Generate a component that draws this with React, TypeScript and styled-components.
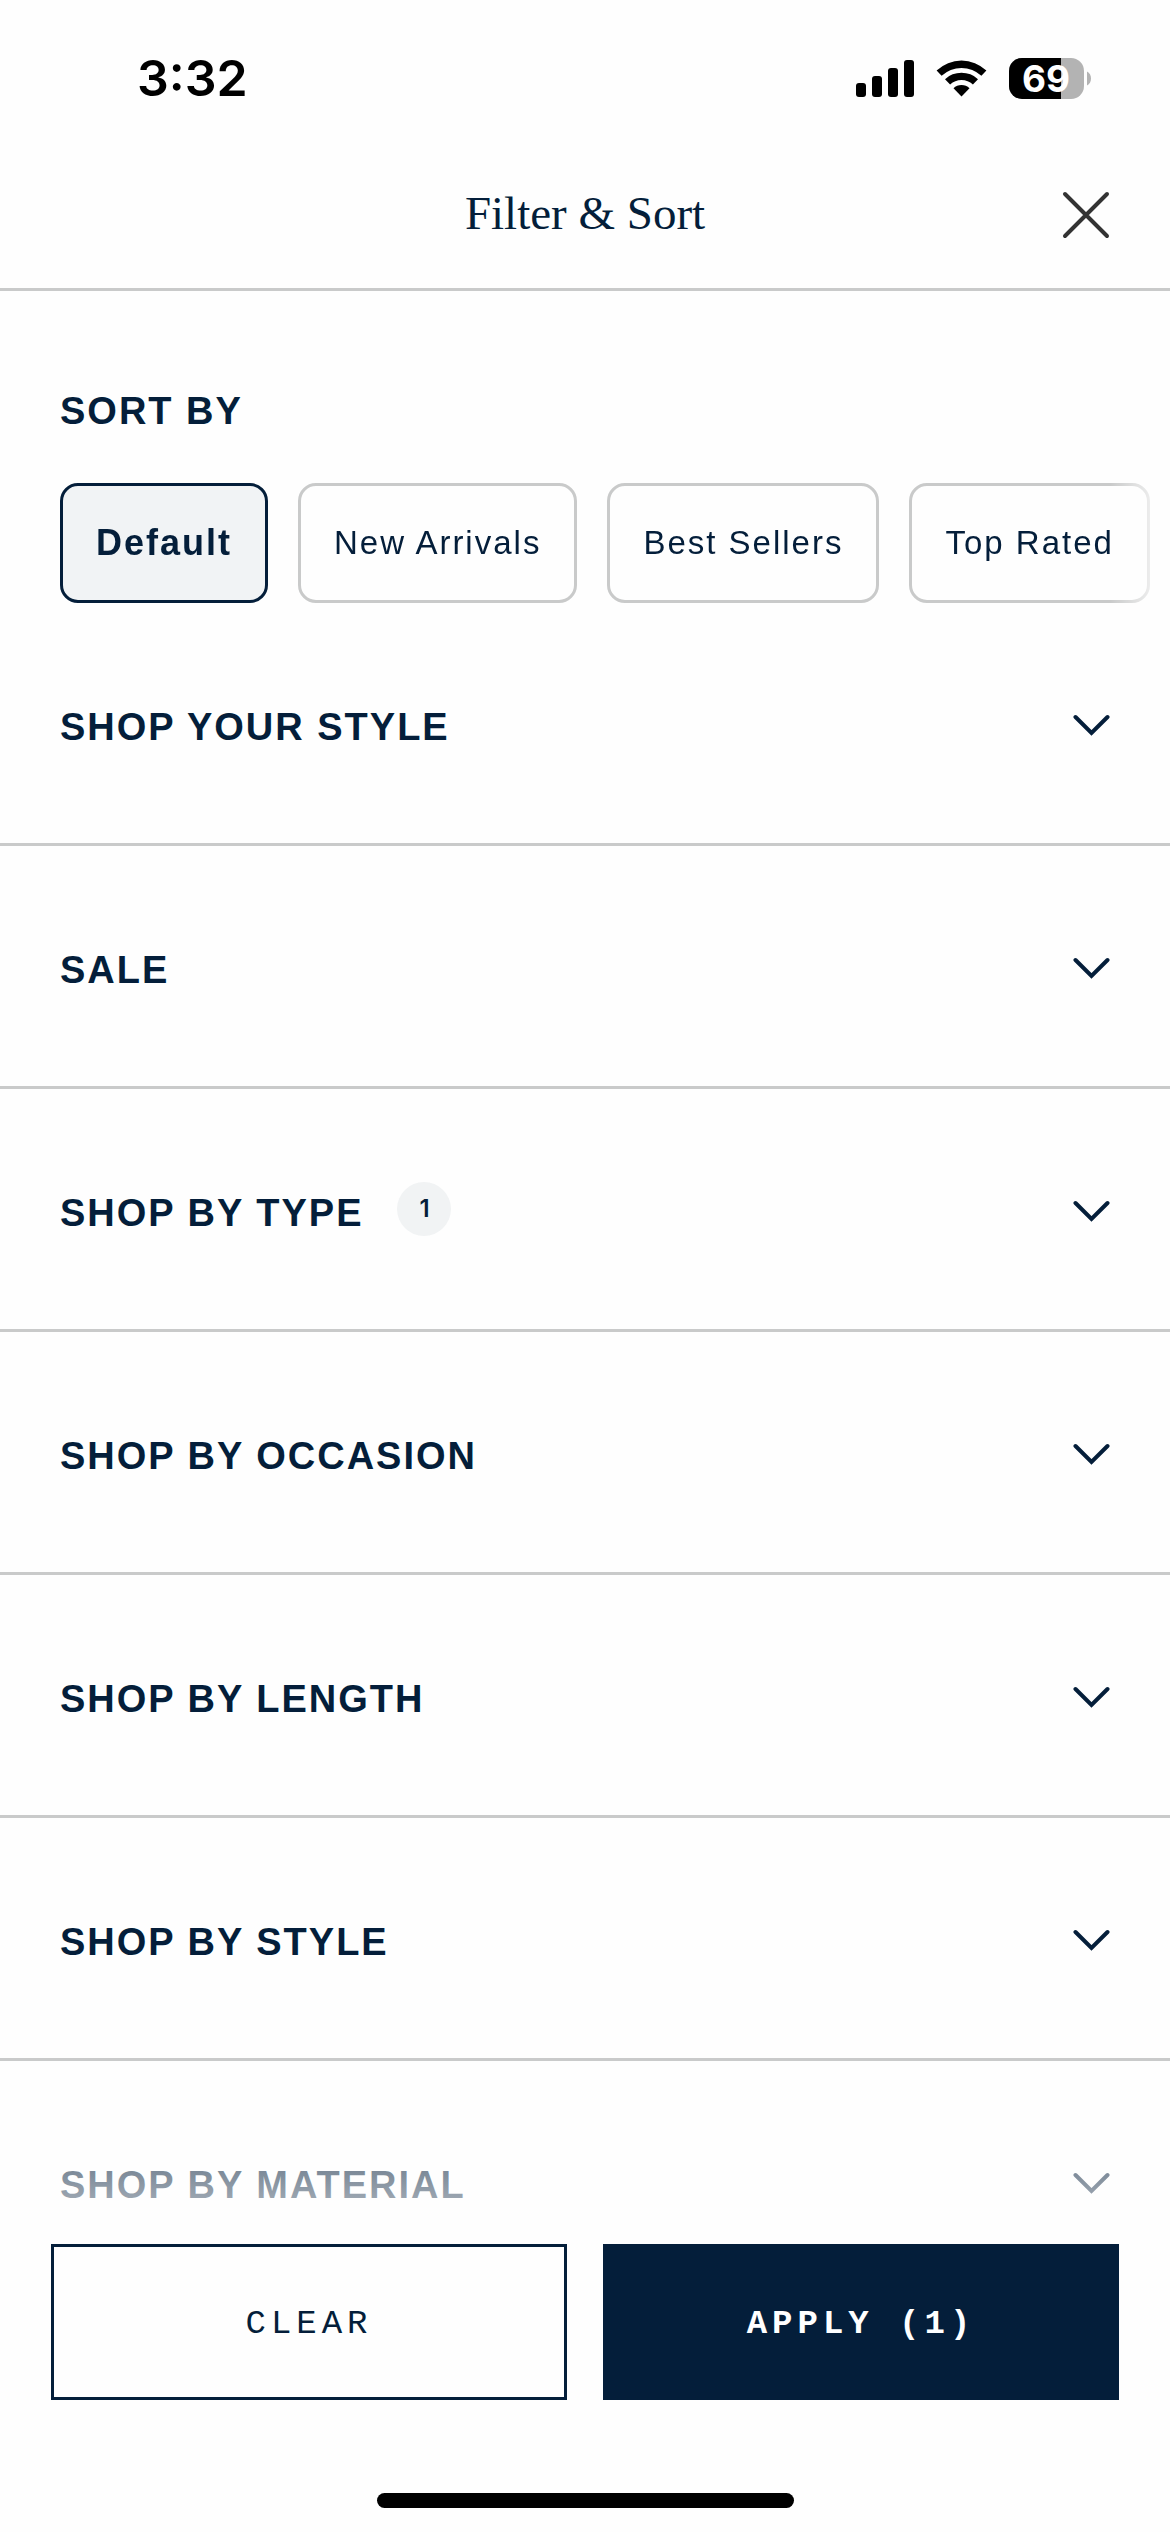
import React, { useState } from 'react';
import styled, { createGlobalStyle } from 'styled-components';

const navy = '#041e3a';
const line = '#c9caca';
const sans = "'Liberation Sans', Arial, sans-serif";
const system = "Inter, 'Liberation Sans', sans-serif";

const GlobalStyle = createGlobalStyle`
  *, *::before, *::after { box-sizing: border-box; }
  body { margin: 0; background: #fefefe; color: ${navy}; font-family: ${sans}; }
  button { font: inherit; color: inherit; background: none; border: 0; padding: 0; cursor: pointer; }
  h1, h2, h3 { margin: 0; }
`;

const Screen = styled.div`
  display: flex;
  flex-direction: column;
  height: 100vh;
  overflow: hidden;
`;

const StatusBar = styled.div`
  display: flex;
  align-items: center;
  justify-content: space-between;
  flex: none;
  height: 156px;
  padding: 0 79px 0 137px;
  color: #000;
`;

const Time = styled.time`
  font-family: ${system};
  font-size: 50px;
  line-height: 60px;
  font-weight: 600;
`;

const StatusIcons = styled.div`
  display: flex;
  align-items: center;
  gap: 22px;
`;

const BatteryText = styled.text`
  font-family: ${system};
  font-size: 37px;
  font-weight: 700;
  fill: #fff;
`;

const Header = styled.header`
  display: grid;
  grid-template-columns: 1fr auto 1fr;
  align-items: center;
  flex: none;
  height: 135px;
  padding: 0 60px 15px;
  border-bottom: 3px solid ${line};
`;

const Title = styled.h1`
  grid-column: 2;
  padding-bottom: 4px;
  font-family: 'Liberation Serif', 'Times New Roman', serif;
  font-size: 47px;
  line-height: 54px;
  font-weight: 400;
`;

const CloseButton = styled.button`
  justify-self: end;
  display: flex;
  color: #333;
`;

const Content = styled.main`
  flex: 1;
  min-height: 0;
  overflow: hidden auto;
  scrollbar-width: none;
`;

const SortSection = styled.section`
  padding-top: 96px;
`;

const SectionTitle = styled.h2`
  padding-left: 60px;
  font-size: 38px;
  line-height: 48px;
  font-weight: 700;
  letter-spacing: 2px;
`;

const ChipRow = styled.div`
  display: flex;
  gap: 30px;
  margin-top: 48px;
  padding: 0 60px;
  overflow: auto hidden;
  scrollbar-width: none;
  mask-image: linear-gradient(to right, #000 calc(100% - 60px), transparent);
`;

const Chip = styled.button<{ $selected: boolean }>`
  flex: none;
  height: 120px;
  padding: 0 33px;
  border: 3px solid ${p => (p.$selected ? navy : line)};
  border-radius: 18px;
  background: ${p => (p.$selected ? '#f1f3f5' : 'transparent')};
  font-size: ${p => (p.$selected ? 36 : 33)}px;
  line-height: 40px;
  font-weight: ${p => (p.$selected ? 700 : 400)};
  letter-spacing: 2px;
`;

const FilterHeading = styled.h3`
  border-bottom: 3px solid ${line};
`;

const FilterButton = styled.button`
  display: flex;
  align-items: center;
  width: 100%;
  height: 240px;
  padding: 0 60px;
  text-align: left;
`;

const FilterLabel = styled.span`
  padding-top: 8px;
  font-size: 38px;
  line-height: 48px;
  font-weight: 700;
  letter-spacing: 2px;
`;

const Badge = styled.span`
  display: grid;
  place-items: center;
  width: 54px;
  height: 54px;
  margin-left: 34px;
  border-radius: 50%;
  background: #f1f3f4;
  font-family: ${system};
  font-size: 24px;
  line-height: 28px;
  font-weight: 600;
`;

const Chevron = styled.svg`
  margin: 4px 0 0 auto;
`;

const Footer = styled.footer`
  position: relative;
  flex: none;
  padding: 0 51px 24px;

  &::before {
    content: '';
    position: absolute;
    inset: auto 0 100%;
    height: 184px;
    background: linear-gradient(to bottom, rgba(254, 254, 254, 0), rgba(254, 254, 254, 0.8));
    pointer-events: none;
  }
`;

const Actions = styled.div`
  display: grid;
  grid-template-columns: 1fr 1fr;
  gap: 36px;
`;

const ActionButton = styled.button<{ $primary?: boolean }>`
  height: 156px;
  padding-top: 4px;
  border: 3px solid ${navy};
  background: ${p => (p.$primary ? navy : 'transparent')};
  color: ${p => (p.$primary ? '#fff' : navy)};
  font-family: 'Liberation Mono', 'Courier New', monospace;
  font-size: 34px;
  line-height: 40px;
  font-weight: ${p => (p.$primary ? 700 : 400)};
  letter-spacing: 5px;
`;

const HomeIndicator = styled.div`
  width: 417px;
  height: 15px;
  margin: 93px auto 0;
  border-radius: 8px;
  background: #000;
`;

const SignalIcon = () => (
  <svg width="58" height="37" viewBox="0 0 58 37" aria-hidden="true">
    <rect x="0" y="23" width="10" height="14" rx="3" />
    <rect x="16" y="16" width="10" height="21" rx="3" />
    <rect x="32" y="8" width="10" height="29" rx="3" />
    <rect x="48" y="0" width="10" height="37" rx="3" />
  </svg>
);

const WifiIcon = () => (
  <svg width="51" height="37" viewBox="0 0 51 37" aria-hidden="true">
    <path d="M0.6 10.600a36 36 0 0 1 49.800 0l-5 5.200a29 29 0 0 0-39.800 0z" />
    <path d="M9 19.200a24 24 0 0 1 33 0l-5.100 5.300a16.600 16.600 0 0 0-22.800 0z" />
    <path d="M17.500 28.200a11.400 11.400 0 0 1 16 0l-8 8.300z" />
  </svg>
);

const BatteryIcon = () => (
  <svg width="82" height="49" viewBox="0 -4 82 49" role="img" aria-label="Battery 69 percent">
    <clipPath id="battery-body">
      <rect width="75" height="41" rx="13" />
    </clipPath>
    <g clipPath="url(#battery-body)">
      <rect width="75" height="41" fill="#b3b3b3" />
      <rect width="52" height="41" />
    </g>
    <path d="M78 13.500c2.600 1.200 4 3.900 4 7s-1.400 5.800-4 7z" fill="#b3b3b3" />
    <BatteryText x="37" y="34" textAnchor="middle">69</BatteryText>
  </svg>
);

const CloseIcon = () => (
  <svg width="48" height="48" viewBox="0 0 48 48" fill="none" stroke="currentColor" strokeWidth="4" strokeLinecap="round" aria-hidden="true">
    <path d="M3 3l42 42M45 3L3 45" />
  </svg>
);

const ChevronIcon = () => (
  <Chevron width="37" height="22" viewBox="0 0 37 22" fill="none" stroke="currentColor" strokeWidth="4" strokeLinecap="round" aria-hidden="true">
    <path d="M2.500 3L18.500 19L34.500 3" />
  </Chevron>
);

const sortOptions = ['Default', 'New Arrivals', 'Best Sellers', 'Top Rated'];

const filters: { label: string; count?: number }[] = [
  { label: 'SHOP YOUR STYLE' },
  { label: 'SALE' },
  { label: 'SHOP BY TYPE', count: 1 },
  { label: 'SHOP BY OCCASION' },
  { label: 'SHOP BY LENGTH' },
  { label: 'SHOP BY STYLE' },
  { label: 'SHOP BY MATERIAL' },
];

export default function App() {
  const [sort, setSort] = useState('Default');

  return (
    <Screen>
      <GlobalStyle />
      <StatusBar>
        <Time>3:32</Time>
        <StatusIcons>
          <SignalIcon />
          <WifiIcon />
          <BatteryIcon />
        </StatusIcons>
      </StatusBar>
      <Header>
        <Title>Filter &amp; Sort</Title>
        <CloseButton type="button" aria-label="Close">
          <CloseIcon />
        </CloseButton>
      </Header>
      <Content>
        <SortSection>
          <SectionTitle>SORT BY</SectionTitle>
          <ChipRow>
            {sortOptions.map(option => (
              <Chip
                key={option}
                type="button"
                $selected={option === sort}
                aria-pressed={option === sort}
                onClick={() => setSort(option)}
              >
                {option}
              </Chip>
            ))}
          </ChipRow>
        </SortSection>
        {filters.map(({ label, count }) => (
          <FilterHeading key={label}>
            <FilterButton type="button" aria-expanded={false}>
              <FilterLabel>{label}</FilterLabel>
              {count && <Badge>{count}</Badge>}
              <ChevronIcon />
            </FilterButton>
          </FilterHeading>
        ))}
      </Content>
      <Footer>
        <Actions>
          <ActionButton type="button">CLEAR</ActionButton>
          <ActionButton type="button" $primary>
            APPLY (1)
          </ActionButton>
        </Actions>
        <HomeIndicator />
      </Footer>
    </Screen>
  );
}
